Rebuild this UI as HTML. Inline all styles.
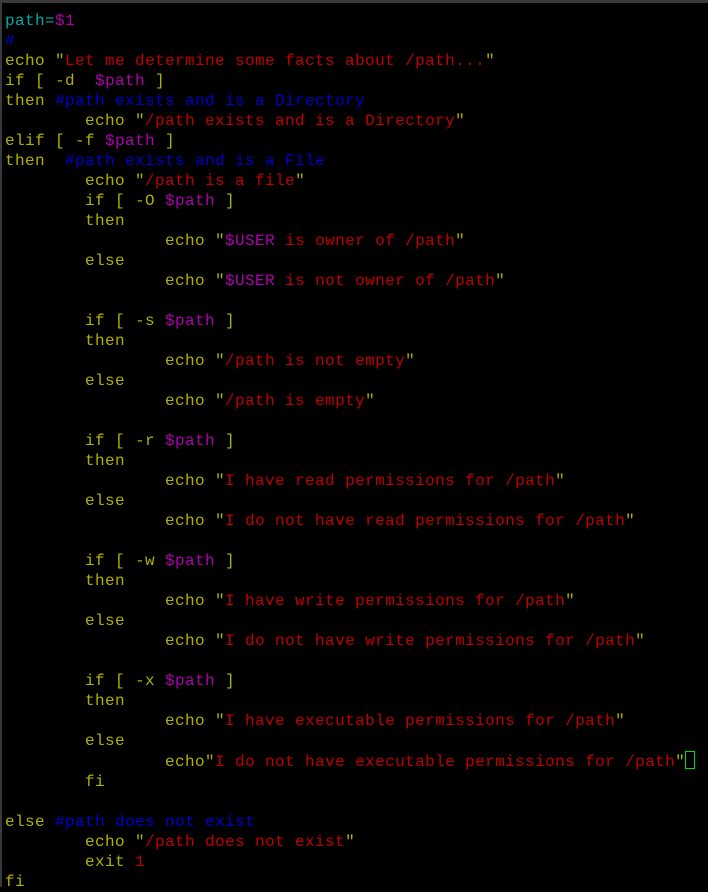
<!DOCTYPE html><html><head><style>
html,body{margin:0;padding:0;background:#000;width:708px;height:887px;overflow:hidden}
body{border-top:3px solid #3a3a3a;border-left:2px solid #3a3a3a;box-sizing:border-box}
pre{margin:0;position:absolute;left:5px;top:11px;font-family:"Liberation Mono",monospace;font-size:16px;letter-spacing:0.4px;line-height:20px;color:#b0b000}
.c{color:#00a8a8}.m{color:#b000b0}.r{color:#c00000}.b{color:#0000d0}
.cur{display:inline-block;width:8px;height:16px;border:1px solid #00e000;vertical-align:-3px}
</style></head><body><pre><span class="c">path=</span><span class="m">$1</span>
<span class="b">#</span>
echo "<span class="r">Let me determine some facts about /path...</span>"
if [ -d  <span class="m">$path</span> ]
then <span class="b">#path exists and is a Directory</span>
        echo "<span class="r">/path exists and is a Directory</span>"
elif [ -f <span class="m">$path</span> ]
then  <span class="b">#path exists and is a File</span>
        echo "<span class="r">/path is a file</span>"
        if [ -O <span class="m">$path</span> ]
        then
                echo "<span class="m">$USER</span><span class="r"> is owner of /path</span>"
        else
                echo "<span class="m">$USER</span><span class="r"> is not owner of /path</span>"

        if [ -s <span class="m">$path</span> ]
        then
                echo "<span class="r">/path is not empty</span>"
        else
                echo "<span class="r">/path is empty</span>"

        if [ -r <span class="m">$path</span> ]
        then
                echo "<span class="r">I have read permissions for /path</span>"
        else
                echo "<span class="r">I do not have read permissions for /path</span>"

        if [ -w <span class="m">$path</span> ]
        then
                echo "<span class="r">I have write permissions for /path</span>"
        else
                echo "<span class="r">I do not have write permissions for /path</span>"

        if [ -x <span class="m">$path</span> ]
        then
                echo "<span class="r">I have executable permissions for /path</span>"
        else
                echo"<span class="r">I do not have executable permissions for /path</span>"<span class="cur"></span>
        fi

else <span class="b">#path does not exist</span>
        echo "<span class="r">/path does not exist</span>"
        exit <span class="r">1</span>
fi</pre></body></html>
